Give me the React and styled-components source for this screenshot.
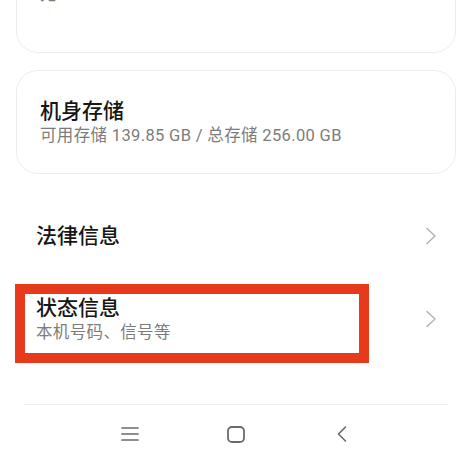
import React from "react";
import styled, { createGlobalStyle } from "styled-components";

const GlobalStyle = createGlobalStyle`
	html, body {
		margin: 0;
		padding: 0;
		background: #ffffff;
	}
	body {
		width: 471px;
		height: 460px;
		overflow: hidden;
		font-family: Roboto, "Noto Sans CJK SC", sans-serif;
	}
`;

const Page = styled.div`
	display: flex;
	flex-direction: column;
	padding: 0 15px 0 16px;
`;

const Card = styled.div`
	display: flex;
	flex-direction: column;
	margin-top: ${(p) => p.$top}px;
	padding: ${(p) => p.$pad};
	border: 1px solid #ececec;
	border-radius: 22px;
	background: #fff;
`;

const Title = styled.div`
	font-size: 21px;
	line-height: 28px;
	font-weight: 500;
	color: #161616;
`;

const Sub = styled.div`
	font-size: 16.5px;
	line-height: 22px;
	letter-spacing: 0.35px;
	color: #7c7c7c;
	white-space: nowrap;
`;

const List = styled.div`
	display: flex;
	flex-direction: column;
	margin-top: 26px;
`;

const Row = styled.div`
	position: relative;
	display: flex;
	align-items: center;
	justify-content: space-between;
	padding: 22px 19px 22px 20px;
`;

const RowText = styled.div`
	display: flex;
	flex-direction: column;
`;

// red highlight frame drawn over the row
const Mark = styled.div`
	position: absolute;
	left: -1px;
	top: 12px;
	width: 354px;
	height: 79px;
	box-sizing: border-box;
	border: 10px solid #e73a1d;
	pointer-events: none;
`;

const NavBar = styled.div`
	display: flex;
	flex-direction: column;
	margin: 38px 23px 0 24px;
	border-top: 1px solid #efefef;
`;

const NavIcons = styled.div`
	display: flex;
	justify-content: center;
	align-items: center;
	gap: 88px;
	height: 58px;
`;

const NavBtn = styled.div`
	display: flex;
	align-items: center;
	justify-content: center;
	width: 18px;
	height: 18px;
`;

const Chevron = () => (
	<svg width="12" height="18" viewBox="0 0 12 18">
		<polyline
			points="2,1.5 10,9 2,16.5"
			fill="none"
			stroke="#b4b4b4"
			strokeWidth="1.5"
			strokeLinecap="round"
			strokeLinejoin="round"
		/>
	</svg>
);

export default function App() {
	return (
		<>
			<GlobalStyle />
			<Page>
				<Card $top={-45} $pad="28px 24px 46px 23px">
					<Sub>无</Sub>
				</Card>

				<Card $top={17} $pad="26px 24px 26px 23px">
					<Title>机身存储</Title>
					<Sub>可用存储 139.85 GB / 总存储 256.00 GB</Sub>
				</Card>

				<List>
					<Row>
						<RowText>
							<Title>法律信息</Title>
						</RowText>
						<Chevron />
					</Row>
					<Row>
						<RowText>
							<Title>状态信息</Title>
							<Sub>本机号码、信号等</Sub>
						</RowText>
						<Chevron />
						<Mark />
					</Row>
				</List>
			</Page>

			<NavBar>
				<NavIcons>
					<NavBtn>
						<svg width="18" height="14" viewBox="0 0 18 14">
							<g stroke="#6a6a6a" strokeWidth="1.7" strokeLinecap="round">
								<line x1="1" y1="1" x2="17" y2="1" />
								<line x1="1" y1="7" x2="17" y2="7" />
								<line x1="1" y1="13" x2="17" y2="13" />
							</g>
						</svg>
					</NavBtn>
					<NavBtn>
						<svg width="18" height="17" viewBox="0 0 18 17">
							<rect x="1" y="1" width="16" height="15" rx="4" fill="none" stroke="#6a6a6a" strokeWidth="1.8" />
						</svg>
					</NavBtn>
					<NavBtn>
						<svg width="10" height="16" viewBox="0 0 10 16">
							<polyline
								points="8.5,1 1.5,8 8.5,15"
								fill="none"
								stroke="#6a6a6a"
								strokeWidth="1.6"
								strokeLinecap="round"
								strokeLinejoin="round"
							/>
						</svg>
					</NavBtn>
				</NavIcons>
			</NavBar>
		</>
	);
}
